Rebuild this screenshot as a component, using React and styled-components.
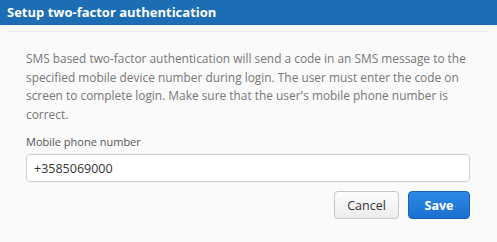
import React, { useState } from "react";
import styled, { createGlobalStyle } from "styled-components";

const GlobalStyle = createGlobalStyle`
    html, body {
        margin: 0;
        padding: 0;
        background: #fafafa;
    }
    body {
        font-family: "Open Sans", "Noto Sans", sans-serif;
    }
`;

const Dialog = styled.div`
    width: 497px;
    height: 242px;
    background: #fafafa;
    display: flex;
    flex-direction: column;
    box-sizing: border-box;
`;

const Header = styled.div`
    height: 25px;
    background: #1c6db3;
    color: #fff;
    font-size: 13px;
    font-weight: 700;
    line-height: 25px;
    padding: 0 7px;
    flex-shrink: 0;
`;

const Body = styled.div`
    margin: 6px 8px 0 7px;
    border-top: 1px solid #e8e8e8;
    padding: 17px 19px 0 19px;
`;

const Description = styled.p`
    margin: 0;
    font-size: 11.9px;
    line-height: 18.5px;
    color: #777;
`;

const Label = styled.label`
    display: block;
    margin-top: 11px;
    font-size: 11px;
    line-height: 16px;
    color: #555;
`;

const Input = styled.input`
    display: block;
    box-sizing: border-box;
    width: 444px;
    height: 28px;
    margin-top: 4px;
    padding: 0 7px;
    border: 1px solid #cfcfcf;
    border-radius: 4px;
    background: #fff;
    font-family: inherit;
    font-size: 12.5px;
    color: #333;
    outline: none;
`;

const Actions = styled.div`
    display: flex;
    justify-content: flex-end;
    gap: 9px;
    width: 444px;
    margin-top: 9px;
`;

const Button = styled.button`
    box-sizing: border-box;
    height: 28px;
    padding: 0;
    width: ${(p) => (p.primary ? "62px" : "65px")};
    border-radius: 4px;
    font-family: inherit;
    font-size: 12.5px;
    font-weight: ${(p) => (p.primary ? 700 : 400)};
    cursor: pointer;
    color: ${(p) => (p.primary ? "#fff" : "#333")};
    border: 1px solid ${(p) => (p.primary ? "#1a62b5" : "#c8c8c8")};
    background: ${(p) =>
        p.primary
            ? "linear-gradient(#2b8ae6, #1b70cf)"
            : "linear-gradient(#fdfdfd, #ececec)"};
`;

const App = () => {
    const [phone, setPhone] = useState("+3585069000");

    return (
        <>
            <GlobalStyle />
            <Dialog>
                <Header>Setup two-factor authentication</Header>
                <Body>
                    <Description>
                        SMS based two-factor authentication will send a code in
                        an SMS message to the specified mobile device number
                        during login. The user must enter the code on screen to
                        complete login. Make sure that the user's mobile phone
                        number is correct.
                    </Description>
                    <Label htmlFor="phone">Mobile phone number</Label>
                    <Input
                        id="phone"
                        value={phone}
                        onChange={(e) => setPhone(e.target.value)}
                    />
                    <Actions>
                        <Button>Cancel</Button>
                        <Button primary>Save</Button>
                    </Actions>
                </Body>
            </Dialog>
        </>
    );
};

export default App;
